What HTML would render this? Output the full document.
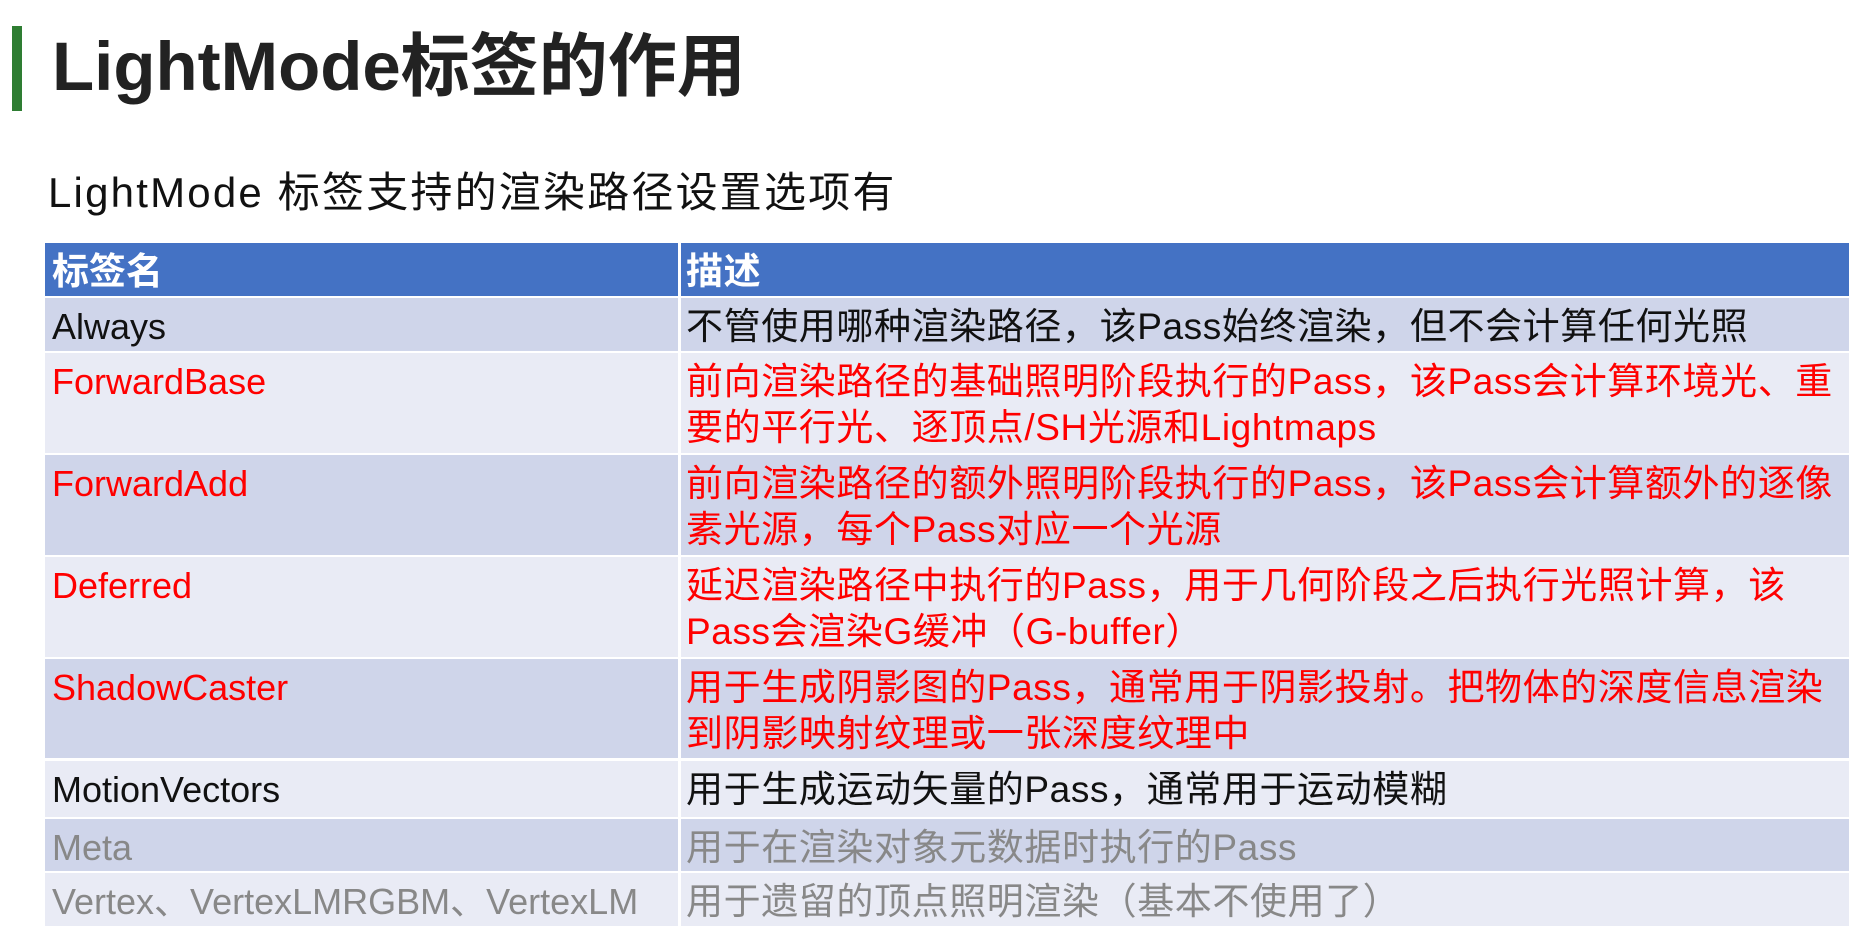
<!DOCTYPE html>
<html><head><meta charset="utf-8"><style>
*{margin:0;padding:0;box-sizing:border-box}
body{width:1869px;height:936px;background:#fff;position:relative;overflow:hidden;font-family:"Liberation Sans","Noto Sans CJK SC",sans-serif}
.bar{position:absolute;left:12px;top:26px;width:10px;height:85px;background:#2e7d32}
h1{position:absolute;left:52px;top:22px;font-size:69px;font-weight:bold;color:#222;letter-spacing:0px;line-height:90px}
.sub{position:absolute;left:48px;top:165px;font-size:42px;color:#111;letter-spacing:2.2px;line-height:56px}
.c{position:absolute;font-size:37px;line-height:46px;padding-top:6px;white-space:nowrap;letter-spacing:0.6px}
.l{left:45px;width:633px;padding-left:7px;letter-spacing:0;font-size:36px}
.r{left:681px;width:1168px;padding-left:5px;overflow:hidden}
.h{background:#4472C4;color:#fff;font-weight:bold}
.d{background:#CFD5EA}
.w{background:#E9EBF5}
.red{color:#f00}.g{color:#888}.k{color:#111}
</style></head><body>
<div class="bar"></div>
<h1>LightMode标签的作用</h1>
<div class="sub">LightMode 标签支持的渲染路径设置选项有</div>

<div class="c l h" style="top:243px;height:53px;font-size:37px">标签名</div>
<div class="c r h" style="top:243px;height:53px">描述</div>

<div class="c l d k" style="top:298px;height:53px">Always</div>
<div class="c r d k" style="top:298px;height:53px">不管使用哪种渲染路径，该Pass始终渲染，但不会计算任何光照</div>

<div class="c l w red" style="top:353px;height:100px">ForwardBase</div>
<div class="c r w red" style="top:353px;height:100px">前向渲染路径的基础照明阶段执行的Pass，该Pass会计算环境光、重<br>要的平行光、逐顶点/SH光源和Lightmaps</div>

<div class="c l d red" style="top:455px;height:100px">ForwardAdd</div>
<div class="c r d red" style="top:455px;height:100px">前向渲染路径的额外照明阶段执行的Pass，该Pass会计算额外的逐像<br>素光源，每个Pass对应一个光源</div>

<div class="c l w red" style="top:557px;height:100px">Deferred</div>
<div class="c r w red" style="top:557px;height:100px">延迟渲染路径中执行的Pass，用于几何阶段之后执行光照计算，该<br>Pass会渲染G缓冲（G-buffer）</div>

<div class="c l d red" style="top:659px;height:99px">ShadowCaster</div>
<div class="c r d red" style="top:659px;height:99px">用于生成阴影图的Pass，通常用于阴影投射。把物体的深度信息渲染<br>到阴影映射纹理或一张深度纹理中</div>

<div class="c l w k" style="top:761px;height:56px">MotionVectors</div>
<div class="c r w k" style="top:761px;height:56px">用于生成运动矢量的Pass，通常用于运动模糊</div>

<div class="c l d g" style="top:819px;height:52px">Meta</div>
<div class="c r d g" style="top:819px;height:52px">用于在渲染对象元数据时执行的Pass</div>

<div class="c l w g" style="top:873px;height:53px">Vertex、VertexLMRGBM、VertexLM</div>
<div class="c r w g" style="top:873px;height:53px">用于遗留的顶点照明渲染（基本不使用了）</div>
</body></html>
